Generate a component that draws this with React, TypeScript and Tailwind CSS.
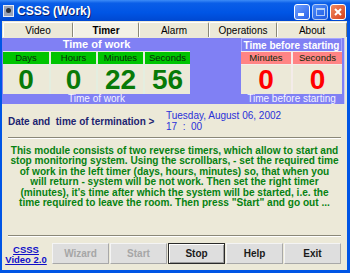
import React from "react";

const F = { fontFamily: '"Liberation Sans", Arial, sans-serif' };

function TitleBar() {
  return (
    <div className="h-[21px] flex items-center relative bg-[linear-gradient(to_bottom,#3d8cf7_0%,#0a5ee8_15%,#0055e5_60%,#0048d0_100%)]">
      <div className="ml-[3px] w-[11px] h-[12px] bg-[#9aa4b8] border border-[#e8ecf4] flex items-center justify-center">
        <div className="w-[5px] h-[5px] rounded-full bg-[#2a2f3a]" />
      </div>
      <span className="ml-[3px] text-white font-bold text-[12px] leading-none" style={{ textShadow: "1px 1px 0 #0a1e6a" }}>
        CSSS (Work)
      </span>
      <div className="ml-auto mr-[4px] flex gap-[2px] mt-[2px]">
        <div className="w-[16px] h-[16px] rounded-[3px] border border-white bg-[linear-gradient(135deg,#6fa0ff,#2a62e8)] flex items-end justify-start p-[3px]">
          <div className="w-[6px] h-[3px] bg-white" />
        </div>
        <div className="w-[16px] h-[16px] rounded-[3px] border border-white bg-[linear-gradient(135deg,#6fa0ff,#2a62e8)] flex items-center justify-center opacity-70">
          <div className="w-[9px] h-[8px] border border-white border-t-[2px]" />
        </div>
        <div className="w-[16px] h-[16px] rounded-[3px] border border-white bg-[linear-gradient(135deg,#f08a60,#d8401c)] flex items-center justify-center">
          <svg width="10" height="10" viewBox="0 0 10 10">
            <path d="M2 2 L8 8 M8 2 L2 8" stroke="white" strokeWidth="2" />
          </svg>
        </div>
      </div>
    </div>
  );
}

function Tab({ label, active, w }: { label: string; active?: boolean; w: string }) {
  return (
    <div
      className={`${w} h-[15px] flex items-center justify-center border-t border-l border-white border-r border-r-[#8a8878] rounded-t-[2px] text-[10px] text-black ${
        active ? "font-bold bg-[#f3f1e6]" : "bg-[#ece9d8]"
      }`}
    >
      {label}
    </div>
  );
}

function Col({ label, value, head, numColor, w }: { label: string; value: string; head: string; numColor: string; w: string }) {
  return (
    <div className={`${w} flex flex-col gap-px`}>
      <div className={`h-[12px] ${head} flex items-center justify-center text-[9.5px] text-[#0a2a0a]`}>{label}</div>
      <div className={`h-[29px] bg-[#ece9d8] flex items-center justify-center font-bold text-[28px] leading-none ${numColor}`}>
        {value}
      </div>
    </div>
  );
}

function Btn({ label, disabled, def }: { label: string; disabled?: boolean; def?: boolean }) {
  return (
    <div
      className={`w-[57px] h-[21px] flex items-center justify-center font-bold text-[10px] bg-[#dedede] ${
        def
          ? "border border-[#2a2a2a] shadow-[inset_1px_1px_0_#ffffff,inset_-1px_-1px_0_#9a9a9a]"
          : "border-t border-l border-t-[#f4f4f4] border-l-[#f4f4f4] border-r border-b border-r-[#a8a8a8] border-b-[#a8a8a8]"
      } ${disabled ? "text-[#a6a6a6]" : "text-[#1a1a1a]"}`}
    >
      {label}
    </div>
  );
}

export default function App() {
  return (
    <div className="w-[350px] h-[273px] bg-[#0055e5] flex flex-col overflow-hidden" style={F}>
      <TitleBar />
      <div className="flex-1 ml-[2px] mr-[3px] mb-[3px] bg-[#ece9d8] flex flex-col">
        {/* Tabs */}
        <div className="h-[16px] flex items-end pl-[1px]">
          <Tab label="Video" w="w-[70px]" />
          <Tab label="Timer" w="w-[66px]" active />
          <Tab label="Alarm" w="w-[70px]" />
          <Tab label="Operations" w="w-[68px]" />
          <Tab label="About" w="w-[70px]" />
        </div>
        {/* Blue timer panel */}
        <div className="mt-px mr-[2px] bg-[#8080f4] flex pl-px pr-[2px] border-r border-[#c8c8f8]">
          <div className="w-[187px] flex flex-col">
            <div className="h-[13px] flex items-center justify-center text-white font-bold text-[11px]">Time of work</div>
            <div className="flex gap-[2px] bg-[#e4eee0] pt-px">
              <Col label="Days" value="0" head="bg-[#00c400]" numColor="text-[#087a08]" w="w-[46px]" />
              <Col label="Hours" value="0" head="bg-[#00c400]" numColor="text-[#087a08]" w="w-[45px]" />
              <Col label="Minutes" value="22" head="bg-[#00c400]" numColor="text-[#087a08]" w="w-[45px]" />
              <Col label="Seconds" value="56" head="bg-[#00c400]" numColor="text-[#087a08]" w="w-[45px]" />
            </div>
            <div className="h-[10px] flex items-center justify-center text-[#f4f4ff] text-[10px] leading-none">Time of work</div>
          </div>
          <div className="flex-1" />
          <div className="w-[101px] flex flex-col">
            <div className="h-[13px] flex items-center justify-center whitespace-nowrap text-white font-bold text-[10px] border-t border-l border-r border-[#a8a8ff]">
              Time before starting
            </div>
            <div className="flex gap-[2px] bg-[#f4ecea] pt-px">
              <Col label="Minutes" value="0" head="bg-[#ff8484]" numColor="text-[#ff0000]" w="w-[50px]" />
              <Col label="Seconds" value="0" head="bg-[#ff8484]" numColor="text-[#ff0000]" w="w-[49px]" />
            </div>
            <div className="h-[10px] flex items-center justify-center whitespace-nowrap text-[#f4f4ff] text-[10px] leading-none">
              Time before starting
            </div>
          </div>
        </div>
        {/* Date row */}
        <div className="h-[33px] flex items-center pl-[6px]">
          <div className="w-[158px] font-bold text-[10px] text-[#1c2470] mt-[2px]">Date and&nbsp; time of termination &gt;</div>
          <div className="flex flex-col text-[10px] leading-[11px] text-[#2a30d8] mt-[1px]">
            <span>Tuesday, August 06, 2002</span>
            <span>17&nbsp; :&nbsp; 00</span>
          </div>
        </div>
        <div className="mx-[6px] h-[2px] border-t border-[#8a8878] border-b border-b-white" />
        {/* Paragraph */}
        <div className="mt-[7px] px-[2px] text-center font-bold text-[10.1px] leading-[10.4px] text-[#078212] whitespace-nowrap">
          This module consists of two reverse timers, which allow to start and
          <br />
          stop monitoring system. Using the scrollbars, - set the required time
          <br />
          of work in the left timer (days, hours, minutes) so, that when you
          <br />
          will return - system will be not work. Then set the right timer
          <br />
          (minutes), it's time after which the system will be started, i.e. the
          <br />
          time required to leave the room. Then press "Start" and go out ...
        </div>
        <div className="flex-1" />
        <div className="mx-[6px] h-[2px] border-t border-[#8a8878] border-b border-b-white" />
        {/* Buttons */}
        <div className="h-[33px] flex items-center pl-px gap-[2px]">
          <div className="w-[46px] flex flex-col items-center text-[9.5px] leading-[10px] font-bold text-[#1010c8] underline mt-[2px]">
            <span>CSSS</span>
            <span>Video 2.0</span>
          </div>
          <div className="ml-[1px] flex gap-[1px]">
            <Btn label="Wizard" disabled />
            <Btn label="Start" disabled />
            <Btn label="Stop" def />
            <Btn label="Help" />
            <Btn label="Exit" />
          </div>
        </div>
      </div>
    </div>
  );
}
